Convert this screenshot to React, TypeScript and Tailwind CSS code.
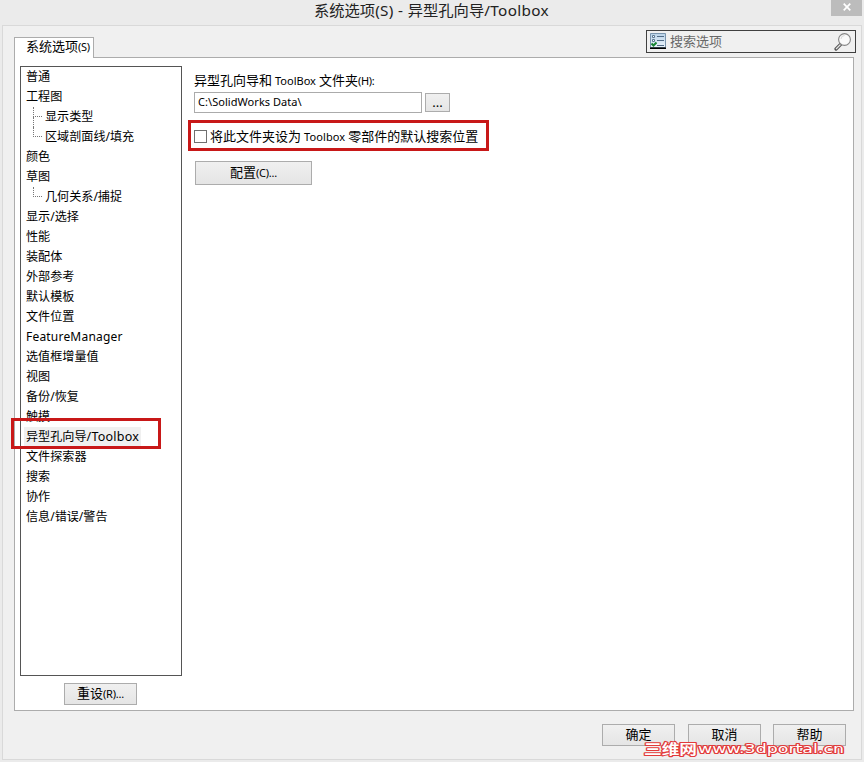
import type { ReactNode } from "react";
import clsx from "clsx";

type Category = {
    label: string;
    latin?: string;
    child?: "middle" | "last";
    selected?: boolean;
};

const categories: Category[] = [
    { label: "普通" },
    { label: "工程图" },
    { label: "显示类型", child: "middle" },
    { label: "区域剖面线/填充", child: "last" },
    { label: "颜色" },
    { label: "草图" },
    { label: "几何关系/捕捉", child: "last" },
    { label: "显示/选择" },
    { label: "性能" },
    { label: "装配体" },
    { label: "外部参考" },
    { label: "默认模板" },
    { label: "文件位置" },
    { label: "", latin: "FeatureManager" },
    { label: "选值框增量值" },
    { label: "视图" },
    { label: "备份/恢复" },
    { label: "触摸" },
    { label: "异型孔向导", latin: "/Toolbox", selected: true },
    { label: "文件探索器" },
    { label: "搜索" },
    { label: "协作" },
    { label: "信息/错误/警告" },
];

export default function App() {
    return (
        <div className="flex h-[762px] w-[864px] flex-col overflow-hidden bg-[#ebebeb] font-['Noto_Sans','Noto_Sans_CJK_SC',sans-serif] text-[13px] whitespace-nowrap text-black">
            <TitleBar />
            <main className="mx-[2px] flex h-[735px] flex-col border border-[#d9d9d9] bg-[#f0f0f0] pr-[7px] pl-[11px]">
                <div className="flex h-[31px] items-start justify-between">
                    <div className="relative z-10 mt-[11px] flex h-[21px] w-[80px] items-center border border-b-0 border-[#acacac] bg-white pb-[3px] pl-[11px] leading-none">
                        系统选项<Small className="tracking-[-0.3px]">(S)</Small>
                    </div>
                    <SearchBox />
                </div>
                <section className="flex h-[654px] w-[840px] gap-[12px] border border-[#acacac] bg-white pt-[8px] pl-[5px]">
                    <div className="flex w-[162px] flex-col">
                        <CategoryList />
                        <Button className="mt-[7px] ml-[44px] h-[22px] w-[73px]">
                            重设<Small className="tracking-[-0.2px]">(R)...</Small>
                        </Button>
                    </div>
                    <ToolboxOptions />
                </section>
                <Footer />
            </main>
        </div>
    );
}

function TitleBar() {
    return (
        <header className="relative h-[25px] shrink-0">
            <h1 className="pt-[2px] pr-px text-center text-[15.3px] leading-[16px] text-[#222]">
                系统选项<span className="tracking-[0.35px]">(S) - </span>异型孔向导<span className="tracking-[0.35px]">/Toolbox</span>
            </h1>
            <button className="absolute top-0 right-[2px] flex h-[16px] w-[31px] items-center justify-center bg-[#bcbcbc]">
                <svg width="8" height="8" viewBox="0 0 8 8" className="mb-[3px]">
                    <path d="M0.7 0.7L7.3 7.3M7.3 0.7L0.7 7.3" stroke="#fff" strokeWidth="1.7" />
                </svg>
            </button>
        </header>
    );
}

function SearchBox() {
    return (
        <div className="mt-[4px] -mr-[2px] flex h-[23px] w-[210px] items-center border border-[#404040] bg-[#f0f0f0] pr-[3px] pb-px pl-[3px] text-[#686868]">
            <svg width="16" height="16" viewBox="0 0 16 16">
                <defs>
                    <linearGradient id="options" x2="0" y2="1">
                        <stop stopColor="#b9d2e8" />
                        <stop offset="1" stopColor="#edf5fc" />
                    </linearGradient>
                </defs>
                <path d="M.5.5h15v14H.5z" fill="url(#options)" stroke="#7994ad" />
                <path d="M0 15.2h16" stroke="#000" strokeWidth="1.6" />
                <path d="M2.5 2.5h2v2h-2zM2.5 6.5h2v2h-2z" fill="#fff" stroke="#5c7892" />
                <path d="M7 3.5h7M7 7.5h7M7 12.5h7" stroke="#506b86" />
                <path d="M1.5 10.5l2 2L6.5 9.5" fill="none" stroke="#168533" strokeWidth="2" />
            </svg>
            <span className="ml-[4px] leading-none">搜索选项</span>
            <svg width="18" height="19" viewBox="0 0 18 19" className="ml-auto">
                <path d="M6.5 12.5L2 17" stroke="#555" strokeWidth="3.2" strokeLinecap="round" />
                <path d="M6.5 12.5L2 17" stroke="#e4e4e4" strokeWidth="1.3" />
                <circle cx="10.5" cy="7.5" r="5.9" fill="#fafafa" stroke="#858585" strokeWidth="1.1" />
                <path d="M7 7a3.7 3.7 0 013.6-3.5" fill="none" stroke="#d8d8d8" />
            </svg>
        </div>
    );
}

function CategoryList() {
    return (
        <ul className="h-[610px] border border-[#555] text-[12.1px] leading-[20px]">
            {categories.map(({ label, latin, child, selected }) => (
                <li key={label + latin} className={clsx("relative flex h-[20px]", child ? "pl-[24px]" : "pl-[5px]")}>
                    {child && (
                        <span className="absolute top-0 left-[12px] h-[10px] w-[9px] border-b border-l border-dotted border-[#777]" />
                    )}
                    {child === "middle" && (
                        <span className="absolute top-[10px] left-[12px] h-[10px] border-l border-dotted border-[#777]" />
                    )}
                    <span className={clsx(selected && "-ml-[2px] bg-[#f0f0f0] pr-[2px] pl-[2px]")}>
                        {label}
                        {latin && (
                            <span className={selected ? "text-[12.5px] tracking-[0.25px]" : "text-[12px] tracking-[0.2px]"}>
                                {latin}
                            </span>
                        )}
                    </span>
                    {selected && <Highlight className="-top-[9px] -left-[10px] h-[31px] w-[150px]" />}
                </li>
            ))}
        </ul>
    );
}

function ToolboxOptions() {
    return (
        <div className="pt-[6px]">
            <div className="flex h-[18px] items-center">
                异型孔向导和<Small className="mx-[3px]">ToolBox</Small>文件夹<Small className="tracking-[-0.3px]">(H):</Small>
            </div>
            <div className="mt-[2px] flex h-[21px] gap-[3px]">
                <input
                    className="h-[21px] w-[228px] border border-[#ababab] bg-white px-[3px] pb-[2px] text-[11px] tracking-[0.05px] outline-none"
                    defaultValue={"C:\\SolidWorks Data\\"}
                />
                <Button className="mt-px h-[19px] w-[25px]">...</Button>
            </div>
            <label className="relative mt-[13px] flex h-[20px] items-center">
                <input type="checkbox" className="mr-[3px] size-[13px] appearance-none border border-[#707070] bg-white" />
                <span className="pt-px">
                    将此文件夹设为<Small className="mx-[3px] tracking-[0.1px]">Toolbox</Small>零部件的默认搜索位置
                </span>
                <Highlight className="-top-[6px] -left-[6px] h-[31px] w-[301px]" />
            </label>
            <Button className="mt-[15px] ml-px h-[24px] w-[117px]">
                配置<Small className="tracking-[-0.2px]">(C)...</Small>
            </Button>
        </div>
    );
}

function Footer() {
    return (
        <footer className="relative mt-[13px] mr-[8px] flex justify-end gap-[12px]">
            <Button className="mr-px h-[22px] w-[73px]">确定</Button>
            <Button className="h-[22px] w-[73px]">取消</Button>
            <Button className="h-[22px] w-[73px]">帮助</Button>
            <svg width="204" height="18" className="absolute top-[17px] right-0 overflow-visible">
                <g fill="#fff" stroke="#e23a3a" strokeWidth="2.2" paintOrder="stroke" strokeLinejoin="round">
                    <text x="2" y="12.5" fontSize="14" fontWeight="700" textLength="53" lengthAdjust="spacingAndGlyphs" fontFamily="Noto Sans CJK SC, sans-serif">
                        三维网
                    </text>
                    <text x="56" y="12" fontSize="12.5" textLength="146" lengthAdjust="spacingAndGlyphs" fontFamily="DejaVu Sans, sans-serif">
                        www.3dportal.cn
                    </text>
                </g>
            </svg>
        </footer>
    );
}

function Button({ className, children }: { className?: string; children: ReactNode }) {
    return (
        <button
            className={clsx(
                "flex items-center justify-center border border-[#acacac] bg-linear-to-b from-[#f0f0f0] to-[#e5e5e5] pb-px leading-none",
                className,
            )}
        >
            {children}
        </button>
    );
}

function Small({ className, children }: { className?: string; children: ReactNode }) {
    return <span className={clsx("text-[11px]", className)}>{children}</span>;
}

function Highlight({ className }: { className: string }) {
    return <span className={clsx("pointer-events-none absolute z-10 border-[3px] border-[#c81818]", className)} />;
}
